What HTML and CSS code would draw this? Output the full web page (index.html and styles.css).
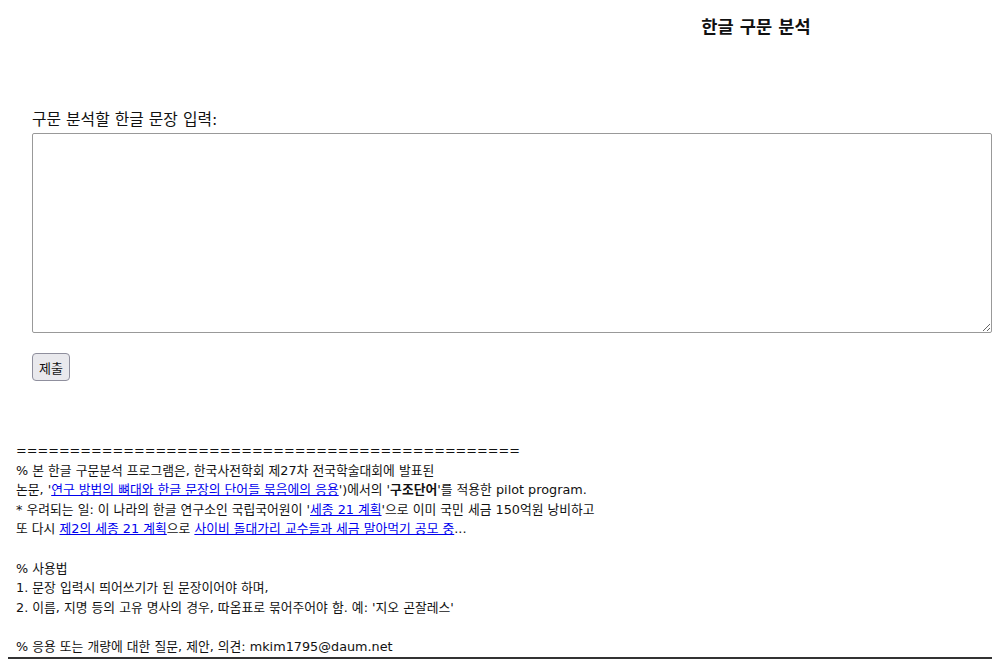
FILE: index.html
```html
<!DOCTYPE html>
<html lang="ko">
  <head>
    <meta charset="UTF-8" />
    <title>한글 구문 분석</title>
    <link rel="stylesheet" href="styles.css">
  </head>
  <body>
    <h3 class="title">한글 구문 분석</h3>

    <form class="parse" autocomplete="off">
      <label class="label" for="sentence">구문 분석할 한글 문장 입력:</label>
      <textarea id="sentence" class="sentence" name="sentence"></textarea>
      <button class="submit" type="button">제출</button>
    </form>

    <div class="notes">
      <p>===============================================</p>
      <p>% 본 한글 구문분석 프로그램은, 한국사전학회 제27차 전국학술대회에 발표된</p>
      <p>논문, '<a href="#">연구 방법의 뼈대와 한글 문장의 단어들 묶음에의 응용</a>')에서의 '<b>구조단어</b>'를 적용한 pilot program.</p>
      <p>* 우려되는 일: 이 나라의 한글 연구소인 국립국어원이 '<a href="#">세종 21 계획</a>'으로 이미 국민 세금 150억원 낭비하고</p>
      <p>또 다시 <a href="#">제2의 세종 21 계획</a>으로 <a href="#">사이비 돌대가리 교수들과 세금 말아먹기 공모 중</a>...</p>
      <p>&nbsp;</p>
      <p>% 사용법</p>
      <p>1. 문장 입력시 띄어쓰기가 된 문장이어야 하며,</p>
      <p>2. 이름, 지명 등의 고유 명사의 경우, 따옴표로 묶어주어야 함. 예: '지오 곤잘레스'</p>
      <p>&nbsp;</p>
      <p>% 응용 또는 개량에 대한 질문, 제안, 의견: mkim1795@daum.net</p>
    </div>
    <hr class="bottom" />
  </body>
</html>
```

FILE: styles.css
```css
* {
  margin: 0;
  padding: 0;
}

body {
  margin: 8px;
  font-family: "DejaVu Sans", "Noto Sans CJK KR", sans-serif;
  color: #111;
  background: #fff;
}
a {
  color: #0000ee;
}
.title {
  padding-left: 512px;
  margin-top: 5px;
  text-align: center;
  font-size: 17.6px;
  font-weight: 700;
}
.parse {
  margin: 69px 0 0 24px;
}
.label {
  display: block;
  font-size: 15.8px;
  margin-bottom: 3px;
}
.sentence {
  display: block;
  width: 960px;
  height: 200px;
  border: 1px solid #999;
  border-radius: 2px;
  box-sizing: border-box;
  outline: none;
}
.submit {
  margin-top: 20px;
  padding: 4px 6px 3px;
  font-family: "DejaVu Sans", "Noto Sans CJK KR", sans-serif;
  font-size: 13px;
  color: #111;
  background: #e9e9ed;
  border: 1px solid #8f8f9d;
  border-radius: 4px;
}
.notes {
  margin: 60px 0 0 8px;
  font-size: 12.8px;
  line-height: 19.6px;
}
.bottom {
  margin-top: 0;
  border: 0;
  border-top: 2px solid #333;
}
```
